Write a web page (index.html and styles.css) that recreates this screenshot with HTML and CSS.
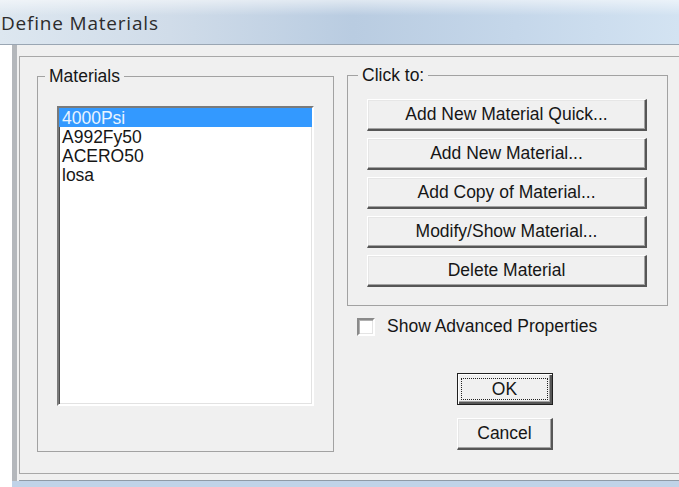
FILE: index.html
```html
<!DOCTYPE html>
<html lang="en">
<head>
<meta charset="utf-8">
<title>Define Materials</title>
<link rel="stylesheet" href="styles.css">
</head>
<body>
<div class="screen">
  <div class="titlebar"><span class="title">Define Materials</span></div>
  <div class="desk">
    <div class="gutter"></div>
    <div class="stack">
      <div class="frame">
        <div class="client">
          <div class="layout">
            <fieldset class="group materials">
              <legend class="materials-legend">Materials</legend>
              <div class="materials-body">
                <ul class="listbox">
                  <li class="item selected">4000Psi</li>
                  <li class="item">A992Fy50</li>
                  <li class="item">ACERO50</li>
                  <li class="item">losa</li>
                </ul>
              </div>
            </fieldset>
            <div class="side">
              <fieldset class="group actions-group">
                <legend class="actions-legend">Click to:</legend>
                <div class="actions-body">
                  <button class="btn wide" type="button">Add New Material Quick...</button>
                  <button class="btn wide" type="button">Add New Material...</button>
                  <button class="btn wide" type="button">Add Copy of Material...</button>
                  <button class="btn wide" type="button">Modify/Show Material...</button>
                  <button class="btn wide" type="button">Delete Material</button>
                </div>
              </fieldset>
              <label class="check"><span class="box"></span><span class="check-text">Show Advanced Properties</span></label>
              <div class="dialog-buttons">
                <button class="btn small default" type="button"><span class="focus">OK</span></button>
                <button class="btn small" type="button">Cancel</button>
              </div>
            </div>
          </div>
        </div>
        <div class="frame-foot"></div>
      </div>
      <div class="band"></div>
    </div>
  </div>
</div>
</body>
</html>
```
FILE: styles.css
```css
html, body {
  margin: 0;
  padding: 0;
}

body {
  width: 679px;
  height: 487px;
  overflow: hidden;
  background: #ffffff;
  font-family: "Liberation Sans", Arial, sans-serif;
  font-size: 17.5px;
  color: #161616;
}

.screen {
  display: flex;
  flex-direction: column;
  height: 487px;
}

/* caption bar */
.titlebar {
  box-sizing: border-box;
  height: 45px;
  padding: 12px 0 0 1px;
  border-bottom: 1px solid #9aa6b3;
  background:
    linear-gradient(to bottom, rgba(255, 255, 255, 0.55), rgba(255, 255, 255, 0) 35%),
    linear-gradient(to right, #dde7f0 0%, #d0dce9 25%, #b9cce1 52%, #c5d7ea 76%, #d3e3f2 100%);
}

.title {
  font-family: "Open Sans", "Noto Sans", sans-serif;
  font-size: 19px;
  line-height: 22px;
  letter-spacing: 0.8px;
  color: #2c2c2c;
}

.desk {
  flex: 1;
  display: flex;
}

.gutter {
  width: 12px;
  background: #ffffff;
}

.stack {
  flex: 1;
  display: flex;
  flex-direction: column;
}

/* window frame */
.frame {
  flex: 1;
  display: flex;
  flex-direction: column;
  padding: 11px 0 0 2px;
  border-left: 5px solid #b4b7bb;
  background: #f0f0f0;
}

.client {
  flex: 1;
  border-top: 1px solid #a8a8a8;
  border-left: 1px solid #a8a8a8;
  border-bottom: 1px solid #a8a8a8;
  background: #f0f0f0;
}

.frame-foot {
  height: 6px;
  border-bottom: 1px solid #8f9aa6;
}

.band {
  height: 6px;
  background: #c0d3e8;
}

/* dialog body */
.layout {
  display: flex;
  align-items: flex-start;
  padding-left: 17px;
}

.group {
  box-sizing: border-box;
  margin: 0;
  padding: 0;
  min-width: 0;
  border: 1px solid #a2a2a2;
}

.group legend {
  padding: 0 4px;
  line-height: 18px;
}

.materials {
  width: 297px;
  margin-top: 10px;
}

.materials-legend {
  margin-left: 7px;
}

.materials-body {
  padding: 21px 19px 45px;
}

.listbox {
  box-sizing: border-box;
  width: 257px;
  height: 300px;
  margin: 0;
  padding: 0;
  list-style: none;
  background: #ffffff;
  border: 2px solid;
  border-color: #7a7a7a #ffffff #ffffff #7a7a7a;
  box-shadow: inset 1px 1px 0 #505050, inset -1px -1px 0 #e2e2e2;
}

.item {
  padding-left: 3px;
  line-height: 20px;
  height: 19px;
}

.item.selected {
  background: #3399ff;
  color: #eaf4ff;
}

.side {
  width: 321px;
  margin-left: 13px;
  margin-top: 9px;
}

.actions-legend {
  margin-left: 10px;
}

.actions-body {
  display: flex;
  flex-direction: column;
  gap: 7px;
  padding: 15px 19px 18px;
}

/* push buttons */
.btn {
  box-sizing: border-box;
  display: flex;
  align-items: center;
  justify-content: center;
  height: 32px;
  padding: 0;
  font: inherit;
  color: #161616;
  background: #f0f0f0;
  border-style: solid;
  border-width: 1px 2px 2px 1px;
  border-color: #ffffff #565656 #565656 #ffffff;
  box-shadow: inset -1px -1px 0 #a3a3a3, inset 1px 1px 0 #e6e6e6;
}

.wide {
  width: 280px;
}

.small {
  width: 96px;
}

.default {
  border: 1px solid #202020;
  box-shadow: inset 1px 1px 0 #ffffff, inset -2px -2px 0 #565656, inset -3px -3px 0 #a3a3a3;
}

.focus {
  box-sizing: border-box;
  display: flex;
  align-items: center;
  justify-content: center;
  width: 87px;
  height: 22px;
  margin-right: 1px;
  border: 1px dotted #222222;
}

/* checkbox */
.check {
  display: flex;
  align-items: center;
  margin: 10px 0 0 10px;
}

.box {
  box-sizing: border-box;
  width: 18px;
  height: 18px;
  margin-right: 12px;
  background: #ffffff;
  border: 2px solid;
  border-color: #8a8a8a #ffffff #ffffff #8a8a8a;
  box-shadow: inset 1px 1px 0 #b0b0b0, inset -1px -1px 0 #e4e4e4;
}

.dialog-buttons {
  display: flex;
  flex-direction: column;
  gap: 13px;
  margin: 36px 0 0 110px;
}
```
